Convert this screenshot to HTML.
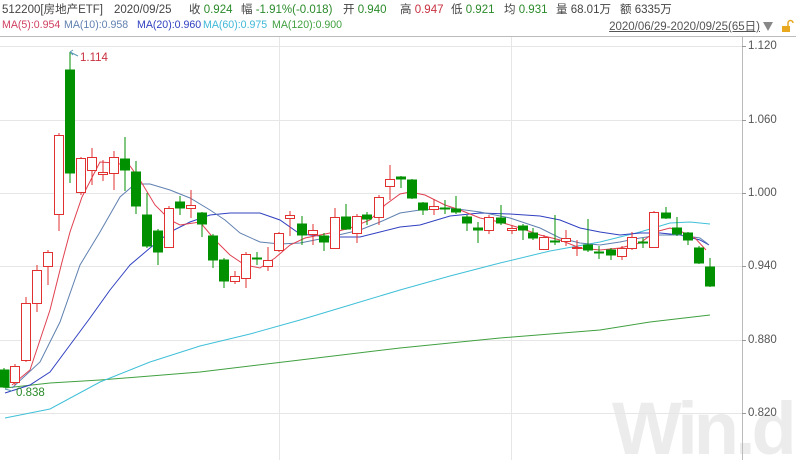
<!DOCTYPE html>
<html><head><meta charset="utf-8"><style>
body{margin:0;width:796px;height:460px;background:#fff;overflow:hidden;font-family:"Liberation Sans","Noto Sans CJK SC",sans-serif;position:relative}
.t{position:absolute;top:3px;font-size:11.5px;line-height:15px;height:15px;color:#444;white-space:nowrap}
.m{position:absolute;top:18px;font-size:10.6px;line-height:14px;height:14px;white-space:nowrap}
.g{color:#2a8a2a}.r{color:#c83040}
.date{position:absolute;right:36px;top:20px;font-size:11.5px;line-height:14px;color:#555;text-decoration:underline;white-space:nowrap}
.ax{position:absolute;left:748px;font-size:11.5px;color:#555}
.wm{position:absolute;left:612px;top:386px;font-size:74px;font-weight:bold;color:#ececec;letter-spacing:-4px;font-family:"Liberation Sans",sans-serif}
</style></head><body>
<div class="wm">Win.d</div>
<svg width="796" height="460" style="position:absolute;left:0;top:0">
<g stroke="#e6e6e6" stroke-width="1">
<line x1="0" y1="46.5" x2="742" y2="46.5"/><line x1="0" y1="120.5" x2="742" y2="120.5"/><line x1="0" y1="193.5" x2="742" y2="193.5"/><line x1="0" y1="266.5" x2="742" y2="266.5"/><line x1="0" y1="340.5" x2="742" y2="340.5"/><line x1="0" y1="413.5" x2="742" y2="413.5"/>
<line x1="279.5" y1="36" x2="279.5" y2="460"/><line x1="511.5" y1="36" x2="511.5" y2="460"/>
</g>
<line x1="0" y1="36.5" x2="796" y2="36.5" stroke="#bbb"/>
<line x1="742.5" y1="36" x2="742.5" y2="460" stroke="#bbb"/>
<g stroke="#999"><line x1="742" y1="46.5" x2="746" y2="46.5"/><line x1="742" y1="120.5" x2="746" y2="120.5"/><line x1="742" y1="193.5" x2="746" y2="193.5"/><line x1="742" y1="266.5" x2="746" y2="266.5"/><line x1="742" y1="340.5" x2="746" y2="340.5"/><line x1="742" y1="413.5" x2="746" y2="413.5"/></g>
<g fill="none" stroke-width="1">
<polyline stroke="#40a040" points="5,388 50,383 100,380 200,372 300,360 400,348 500,338 600,330 650,322 710,315"/>
<polyline stroke="#40c0d8" points="5,418 50,409 100,382 150,362 200,346 250,334 300,320 350,305 400,290 450,276 500,263 550,251 600,242 640,232 670,223 690,222 710,224"/>
<polyline stroke="#3040c0" points="5,393 30,385 50,372 70,345 90,318 110,290 130,265 150,248 170,232 190,222 210,215 230,213 260,213 280,220 300,234 330,237 360,237 380,232 400,227 420,225 450,216 480,213 510,214 540,216 560,220 580,228 600,232 620,235 640,233 660,233 680,235 700,240 709,245"/>
<polyline stroke="#6080b0" points="12,388 40,362 60,322 80,265 100,232 120,197 135,184 150,184 170,190 190,198 210,210 225,220 240,233 260,242 280,244 300,243 330,237 360,230 380,222 400,213 420,210 450,208 480,212 510,218 540,228 560,238 580,243 600,245 620,242 640,238 660,235 680,235 700,238 708,244"/>
<polyline stroke="#e04050" points="12,385 30,370 50,310 62,262 70,232 82,197 100,162 115,163 130,166 140,180 155,205 170,220 180,225 200,222 215,240 230,255 245,265 260,268 275,258 290,245 305,238 320,235 335,232 350,228 370,220 385,205 400,194 410,192 425,195 445,205 460,210 480,218 500,222 520,228 540,235 560,240 580,248 600,250 620,248 640,243 655,232 670,228 680,231 695,238 706,250"/>
</g>
</svg>
<svg width="796" height="460" style="position:absolute;left:0;top:0">
<g stroke="#009000" fill="#009000">
<line x1="4" y1="368" x2="4" y2="388"/><rect x="-1" y="370" width="10" height="17"/>
<line x1="70" y1="52" x2="70" y2="183"/><rect x="65.5" y="70" width="9" height="103"/>
<line x1="125" y1="137" x2="125" y2="191"/><rect x="120.5" y="159" width="9" height="11"/>
<line x1="136" y1="161" x2="136" y2="214"/><rect x="131.5" y="172" width="9" height="34"/>
<line x1="147" y1="193" x2="147" y2="248"/><rect x="142.5" y="215" width="9" height="31"/>
<line x1="158" y1="229" x2="158" y2="265"/><rect x="153.5" y="231" width="9" height="21"/>
<line x1="180" y1="196" x2="180" y2="215"/><rect x="175.5" y="202" width="9" height="6"/>
<line x1="202" y1="212" x2="202" y2="237"/><rect x="197.5" y="213" width="9" height="11"/>
<line x1="213" y1="234" x2="213" y2="268"/><rect x="208.5" y="236" width="9" height="24"/>
<line x1="224" y1="258" x2="224" y2="288"/><rect x="219.5" y="260" width="9" height="21"/>
<line x1="257" y1="252" x2="257" y2="265"/><rect x="252.5" y="258" width="9" height="1"/>
<line x1="302" y1="216" x2="302" y2="245"/><rect x="297.5" y="224" width="9" height="11"/>
<line x1="324" y1="233" x2="324" y2="251"/><rect x="319.5" y="236" width="9" height="6"/>
<line x1="346" y1="204" x2="346" y2="230"/><rect x="341.5" y="217" width="9" height="12"/>
<line x1="367" y1="212" x2="367" y2="225"/><rect x="362.5" y="215" width="9" height="4"/>
<line x1="401" y1="176" x2="401" y2="188"/><rect x="396.5" y="177" width="9" height="2"/>
<line x1="412" y1="179" x2="412" y2="199"/><rect x="407.5" y="180" width="9" height="18"/>
<line x1="423" y1="202" x2="423" y2="215"/><rect x="418.5" y="203" width="9" height="7"/>
<line x1="445" y1="200" x2="445" y2="214"/><rect x="440.5" y="208" width="9" height="1"/>
<line x1="456" y1="196" x2="456" y2="214"/><rect x="451.5" y="209" width="9" height="3"/>
<line x1="467" y1="215" x2="467" y2="231"/><rect x="462.5" y="217" width="9" height="6"/>
<line x1="478" y1="222" x2="478" y2="243"/><rect x="473.5" y="228" width="9" height="2"/>
<line x1="501" y1="205" x2="501" y2="225"/><rect x="496.5" y="218" width="9" height="5"/>
<line x1="523" y1="224" x2="523" y2="240"/><rect x="518.5" y="226" width="9" height="4"/>
<line x1="533" y1="228" x2="533" y2="240"/><rect x="528.5" y="233" width="9" height="5"/>
<line x1="555" y1="215" x2="555" y2="245"/><rect x="550.5" y="241" width="9" height="1"/>
<line x1="588" y1="219" x2="588" y2="252"/><rect x="583.5" y="245" width="9" height="5"/>
<line x1="599" y1="246" x2="599" y2="259"/><rect x="594.5" y="252" width="9" height="1"/>
<line x1="611" y1="248" x2="611" y2="260"/><rect x="606.5" y="250" width="9" height="5"/>
<line x1="643" y1="238" x2="643" y2="248"/><rect x="638.5" y="242" width="9" height="1"/>
<line x1="666" y1="207" x2="666" y2="219"/><rect x="661.5" y="213" width="9" height="5"/>
<line x1="677" y1="217" x2="677" y2="236"/><rect x="672.5" y="228" width="9" height="6"/>
<line x1="688" y1="232" x2="688" y2="245"/><rect x="683.5" y="233" width="9" height="7"/>
<line x1="699" y1="246" x2="699" y2="264"/><rect x="694.5" y="248" width="9" height="15"/>
<line x1="710" y1="258" x2="710" y2="287"/><rect x="705.5" y="267" width="9" height="19"/>
</g>
<g stroke="#e03030" fill="#fff">
<line x1="15" y1="364" x2="15" y2="385"/><rect x="10.5" y="366.5" width="9" height="16"/>
<line x1="26" y1="297" x2="26" y2="362"/><rect x="21.5" y="303.5" width="9" height="57"/>
<line x1="37" y1="265" x2="37" y2="312"/><rect x="32.5" y="270.5" width="9" height="33"/>
<line x1="48" y1="250" x2="48" y2="285"/><rect x="43.5" y="252.5" width="9" height="14"/>
<line x1="59" y1="133" x2="59" y2="231"/><rect x="54.5" y="135.5" width="9" height="79"/>
<line x1="81" y1="157" x2="81" y2="195"/><rect x="76.5" y="158.5" width="9" height="34"/>
<line x1="92" y1="148" x2="92" y2="185"/><rect x="87.5" y="157.5" width="9" height="13"/>
<line x1="103" y1="160" x2="103" y2="181"/><rect x="98.5" y="172.5" width="9" height="2"/>
<line x1="114" y1="151" x2="114" y2="190"/><rect x="109.5" y="157.5" width="9" height="16"/>
<line x1="169" y1="206" x2="169" y2="248"/><rect x="164.5" y="208.5" width="9" height="39"/>
<line x1="191" y1="190" x2="191" y2="218"/><rect x="186.5" y="205.5" width="9" height="3"/>
<line x1="235" y1="271" x2="235" y2="284"/><rect x="230.5" y="276.5" width="9" height="5"/>
<line x1="246" y1="252" x2="246" y2="288"/><rect x="241.5" y="254.5" width="9" height="24"/>
<line x1="268" y1="247" x2="268" y2="271"/><rect x="263.5" y="260.5" width="9" height="6"/>
<line x1="279" y1="232" x2="279" y2="252"/><rect x="274.5" y="233.5" width="9" height="17"/>
<line x1="290" y1="211" x2="290" y2="236"/><rect x="285.5" y="215.5" width="9" height="3"/>
<line x1="313" y1="224" x2="313" y2="245"/><rect x="308.5" y="230.5" width="9" height="4"/>
<line x1="335" y1="208" x2="335" y2="249"/><rect x="330.5" y="217.5" width="9" height="31"/>
<line x1="357" y1="214" x2="357" y2="243"/><rect x="352.5" y="216.5" width="9" height="17"/>
<line x1="379" y1="195" x2="379" y2="225"/><rect x="374.5" y="197.5" width="9" height="20"/>
<line x1="390" y1="165" x2="390" y2="200"/><rect x="385.5" y="179.5" width="9" height="7"/>
<line x1="434" y1="199" x2="434" y2="215"/><rect x="429.5" y="206.5" width="9" height="3"/>
<line x1="489" y1="215" x2="489" y2="234"/><rect x="484.5" y="217.5" width="9" height="13"/>
<line x1="512" y1="225" x2="512" y2="234"/><rect x="507.5" y="228.5" width="9" height="2"/>
<line x1="544" y1="235" x2="544" y2="250"/><rect x="539.5" y="237.5" width="9" height="12"/>
<line x1="566" y1="230" x2="566" y2="246"/><rect x="561.5" y="238.5" width="9" height="3"/>
<line x1="577" y1="240" x2="577" y2="256"/><rect x="572.5" y="247.5" width="9" height="1"/>
<line x1="622" y1="246" x2="622" y2="260"/><rect x="617.5" y="248.5" width="9" height="8"/>
<line x1="632" y1="232" x2="632" y2="250"/><rect x="627.5" y="237.5" width="9" height="11"/>
<line x1="654" y1="211" x2="654" y2="248"/><rect x="649.5" y="212.5" width="9" height="35"/>
</g>
<g fill="none" stroke="#5a9ab0"><path d="M70,52 L78,56 M70,52 l3,-2 M70,52 l3,3"/><path d="M5,389 L12,391"/></g>
<text x="80" y="61" font-size="11.5" fill="#c83040" font-family="Liberation Sans">1.114</text>
<text x="16" y="396" font-size="11.5" fill="#2a8a2a" font-family="Liberation Sans">0.838</text>
<path d="M763,22 L773,22 L768,31 Z" fill="#888"/>
<rect x="782" y="26" width="8" height="6" fill="#e8a820"/><path d="M788,26 v-3 a2.5,2.5 0 0 1 5,0" stroke="#e8a820" fill="none" stroke-width="1.5"/>
</svg>
<div class="t" style="left:2px">512200[房地产ETF]</div>
<div class="t" style="left:114px">2020/09/25</div>
<div class="t" style="left:189px">收 <span class="g">0.924</span></div>
<div class="t" style="left:241px">幅 <span class="g">-1.91%(-0.018)</span></div>
<div class="t" style="left:343px">开 <span class="g">0.940</span></div>
<div class="t" style="left:400px">高 <span class="r">0.947</span></div>
<div class="t" style="left:451px">低 <span class="g">0.921</span></div>
<div class="t" style="left:504px">均 <span class="g">0.931</span></div>
<div class="t" style="left:556px">量 68.01万</div>
<div class="t" style="left:620px">额 6335万</div>
<div class="m" style="left:2px;color:#d04060">MA(5):0.954</div>
<div class="m" style="left:64px;color:#6080b0">MA(10):0.958</div>
<div class="m" style="left:137px;color:#3040c0">MA(20):0.960</div>
<div class="m" style="left:203px;color:#40b8d8">MA(60):0.975</div>
<div class="m" style="left:272px;color:#40a040">MA(120):0.900</div>
<div class="date">2020/06/29-2020/09/25(65日)</div>
<div class="ax" style="top:40px">1.120</div>
<div class="ax" style="top:114px">1.060</div>
<div class="ax" style="top:187px">1.000</div>
<div class="ax" style="top:260px">0.940</div>
<div class="ax" style="top:334px">0.880</div>
<div class="ax" style="top:407px">0.820</div>
</body></html>
